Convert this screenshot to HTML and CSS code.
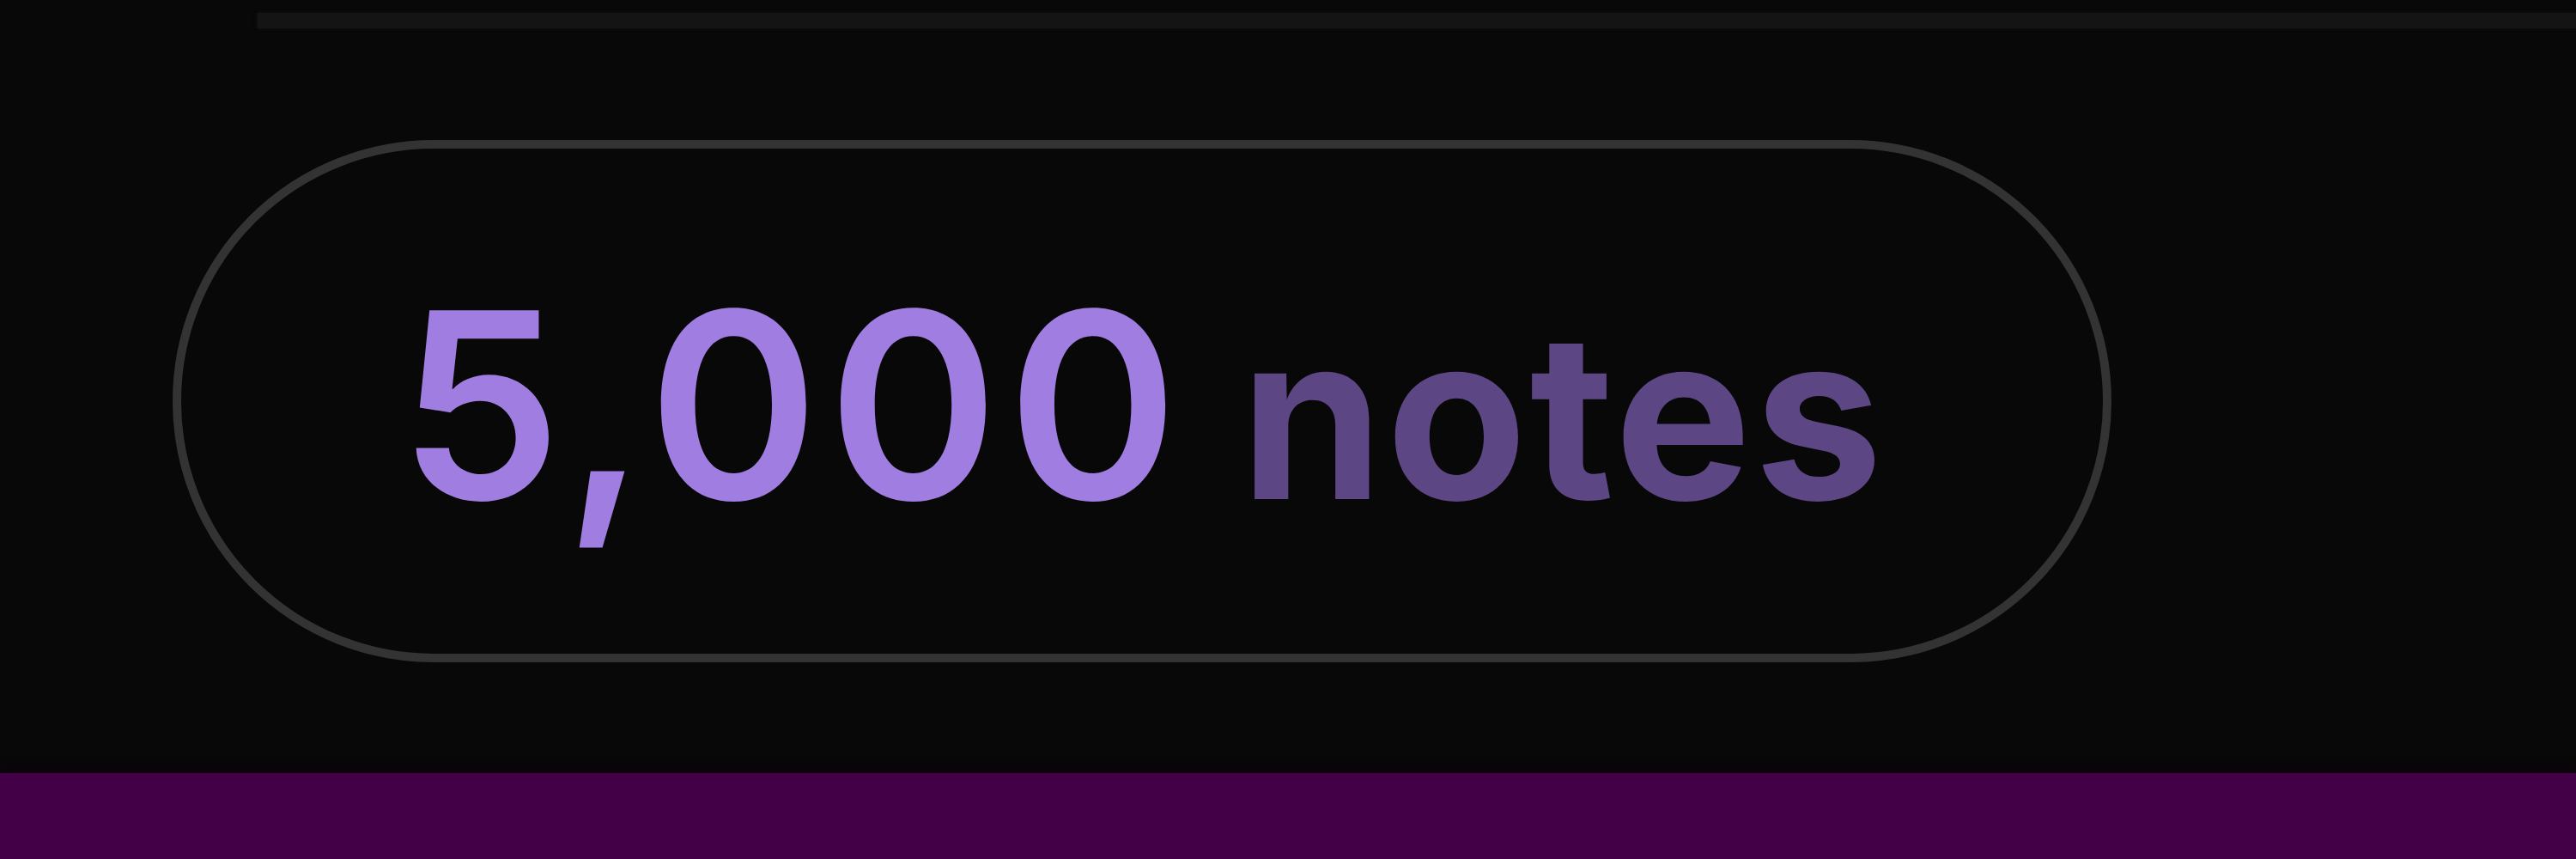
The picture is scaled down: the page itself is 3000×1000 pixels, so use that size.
FILE: index.html
```html
<!DOCTYPE html>
<html lang="en">
<head>
    <meta charset="UTF-8">
    <meta name="viewport" content="width=device-width, initial-scale=1.0">
    <title>Notes count</title>
    <link rel="stylesheet" href="styles.css">
</head>
<body>
    <div class="top-rule"></div>

    <main class="stage">
        <div class="count-pill">
            <div class="count-text">
                <span class="count-num">5,000</span>
                <span class="count-label">notes</span>
            </div>
        </div>
    </main>

    <footer class="band"></footer>
</body>
</html>
```

FILE: styles.css
```css
html, body {
    margin: 0;
    padding: 0;
    background: #080808;
    font-family: Inter, "Noto Sans", sans-serif;
}
body {
    width: 3000px;
    height: 1000px;
    display: flex;
    flex-direction: column;
    overflow: hidden;
}
.top-rule {
    height: 18px;
    margin: 15px 0 0 300px;
    background: #141414;
    box-shadow: 0 0 4px #141414;
}
.stage {
    flex: 1;
    padding: 130px 0 0 201px;
}
.count-pill {
    box-sizing: border-box;
    width: 2258px;
    height: 608px;
    border: 10px solid #333333;
    border-radius: 304px;
    display: flex;
    align-items: center;
    justify-content: center;
    padding: 8px 0 0 0;
}
.count-text {
    display: flex;
    align-items: baseline;
    gap: 62px;
    line-height: 1;
}
.count-num {
    color: #a07de0;
    font-size: 302px;
    font-weight: 600;
    letter-spacing: 10px;
}
.count-label {
    color: #5d4684;
    font-size: 268px;
    font-weight: 700;
    letter-spacing: 3px;
}
.band {
    height: 100px;
    background: #430047;
    box-shadow: 0 -6px 10px #10000f;
}
```
